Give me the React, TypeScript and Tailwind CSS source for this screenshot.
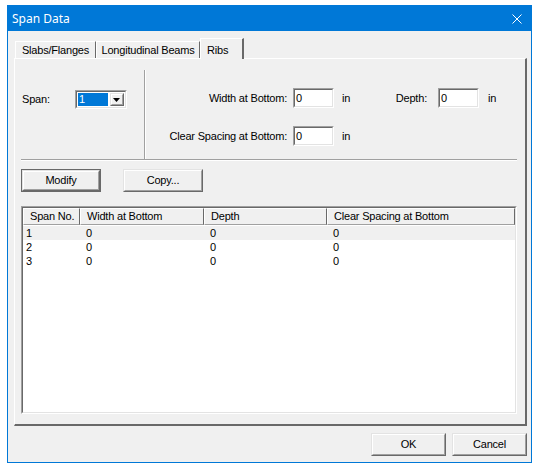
import React from "react";

type BoxProps = { className?: string; innerClassName?: string; children?: React.ReactNode };

const Sunken: React.FC<BoxProps> = ({ className = "", innerClassName = "", children }) => (
  <div className={`border border-t-[#a0a0a0] border-l-[#a0a0a0] border-b-white border-r-white ${className}`}>
    <div
      className={`h-full w-full border border-t-[#696969] border-l-[#696969] border-b-[#e3e3e3] border-r-[#e3e3e3] ${innerClassName}`}
    >
      {children}
    </div>
  </div>
);

const Raised: React.FC<BoxProps> = ({ className = "", innerClassName = "", children }) => (
  <div className={`border border-t-[#e3e3e3] border-l-[#e3e3e3] border-b-[#696969] border-r-[#696969] ${className}`}>
    <div
      className={`h-full w-full border border-t-white border-l-white border-b-[#a0a0a0] border-r-[#a0a0a0] ${innerClassName}`}
    >
      {children}
    </div>
  </div>
);

const Button: React.FC<{ label: string; width: string; isDefault?: boolean }> = ({ label, width, isDefault }) => (
  <div className={`${width} h-[23px] ${isDefault ? "border border-[#696969]" : ""}`}>
    <Raised className="h-full w-full bg-[#f0f0f0]" innerClassName="flex items-center justify-center">
      {label}
    </Raised>
  </div>
);

const TextBox: React.FC<{ value: string }> = ({ value }) => (
  <Sunken className="w-[41px] h-[20px] bg-white" innerClassName="flex items-center pl-[1px]">
    {value}
  </Sunken>
);

const Tab: React.FC<{ label: string; width: string; selected?: boolean }> = ({ label, width, selected }) =>
  selected ? (
    <div
      className={`${width} h-[21px] -mb-[1px] relative z-10 bg-[#f0f0f0] border-t border-l border-t-white border-l-white border-r-2 border-r-[#696969] flex items-start pt-[3px] pl-[6px]`}
    >
      {label}
    </div>
  ) : (
    <div
      className={`${width} h-[17px] bg-[#f0f0f0] border-t border-l border-t-white border-l-white border-r border-r-[#696969] flex items-center justify-center`}
    >
      {label}
    </div>
  );

const columns = [
  { title: "Span No.", width: "w-[57px]" },
  { title: "Width at Bottom", width: "w-[124px]" },
  { title: "Depth", width: "w-[123px]" },
  { title: "Clear Spacing at Bottom", width: "w-[188px]" },
];

const rows = [
  ["1", "0", "0", "0"],
  ["2", "0", "0", "0"],
  ["3", "0", "0", "0"],
];

export default function App() {
  return (
    <div
      className="w-[540px] h-[469px] bg-white overflow-hidden pt-[5px] pl-[7px] text-[11px] tracking-[-0.2px] text-black"
      style={{ fontFamily: '"Liberation Sans", Arial, sans-serif' }}
    >
      <div className="w-[525px] h-[458px] border border-[#0078d7] bg-[#f0f0f0] flex flex-col">
        {/* title bar */}
        <div className="h-[25px] bg-[#0078d7] flex items-center justify-between pl-[4px] pr-[9px] text-white">
          <span className="text-[12px] tracking-normal" style={{ fontFamily: '"Noto Sans", "Open Sans", sans-serif' }}>
            Span Data
          </span>
          <svg width="10" height="10" viewBox="0 0 10 10">
            <path d="M0.5 0.5 L9.5 9.5 M9.5 0.5 L0.5 9.5" stroke="white" strokeWidth="1" />
          </svg>
        </div>

        <div className="flex-1 flex flex-col pt-[7px]">
          {/* tabs */}
          <div className="h-[20px] flex items-end pl-[7px]">
            <Tab label="Slabs/Flanges" width="w-[81px]" />
            <Tab label="Longitudinal Beams" width="w-[104px]" />
            <Tab label="Ribs" width="w-[44px]" selected />
          </div>

          {/* tab panel */}
          <div className="ml-[6px] w-[513px] h-[368px] border-t border-l border-t-white border-l-white border-r-2 border-b-2 border-r-[#696969] border-b-[#696969] flex flex-col">
            <div className="flex h-[100px]">
              <div className="w-[129px] pl-[7px] pt-[31px] flex items-start">
                <div className="w-[53px] h-[19px] flex items-center">Span:</div>
                <Sunken className="w-[52px] h-[19px] bg-white" innerClassName="flex items-stretch p-[1px]">
                  <div className="w-[32px] bg-[#0078d7] text-white flex items-center pl-[1px]">1</div>
                  <Raised className="ml-[2px] w-[15px] bg-[#f0f0f0]" innerClassName="flex items-center justify-center">
                    <svg width="7" height="4" viewBox="0 0 7 4">
                      <path d="M0 0 H7 L3.5 4 Z" fill="black" />
                    </svg>
                  </Raised>
                </Sunken>
              </div>
              <div className="w-[2px] mt-[11px] border-l border-l-[#a0a0a0] border-r border-r-white" />
              <div className="flex flex-col pt-[29px]">
                <div className="flex items-center h-[20px]">
                  <div className="w-[141px] text-right">Width at Bottom:</div>
                  <div className="ml-[6px]">
                    <TextBox value="0" />
                  </div>
                  <div className="ml-[8px] w-[20px]">in</div>
                  <div className="w-[65px] text-right">Depth:</div>
                  <div className="ml-[11px]">
                    <TextBox value="0" />
                  </div>
                  <div className="ml-[9px]">in</div>
                </div>
                <div className="flex items-center h-[20px] mt-[18px]">
                  <div className="w-[141px] text-right">Clear Spacing at Bottom:</div>
                  <div className="ml-[6px]">
                    <TextBox value="0" />
                  </div>
                  <div className="ml-[8px]">in</div>
                </div>
              </div>
            </div>

            <div className="ml-[6px] w-[496px] h-[2px] border-t border-t-[#a0a0a0] border-b border-b-white" />

            <div className="mt-[8px] ml-[6px] flex gap-[22px]">
              <Button label="Modify" width="w-[80px]" isDefault />
              <Button label="Copy..." width="w-[80px]" />
            </div>

            {/* list */}
            <Sunken className="mt-[14px] ml-[6px] w-[496px] h-[208px] bg-white" innerClassName="flex flex-col">
              <div className="flex h-[17px] bg-[#f0f0f0]">
                {columns.map((c) => (
                  <div
                    key={c.title}
                    className={`${c.width} border-t border-l border-t-white border-l-white border-b border-r border-b-[#a0a0a0] border-r-[#696969] flex items-center pl-[6px]`}
                  >
                    {c.title}
                  </div>
                ))}
              </div>
              <div className="pt-[1px]">
                {rows.map((r, i) => (
                  <div key={i} className={`flex h-[14px] items-center ${i === 0 ? "bg-[#f0f0f0]" : ""}`}>
                    {r.map((v, j) => (
                      <div key={j} className={`${columns[j].width} ${j === 0 ? "pl-[3px]" : "pl-[6px]"}`}>
                        {v}
                      </div>
                    ))}
                  </div>
                ))}
              </div>
            </Sunken>
          </div>

          <div className="mt-[7px] flex justify-end gap-[6px] pr-[4px]">
            <Button label="OK" width="w-[75px]" />
            <Button label="Cancel" width="w-[75px]" />
          </div>
        </div>
      </div>
    </div>
  );
}
